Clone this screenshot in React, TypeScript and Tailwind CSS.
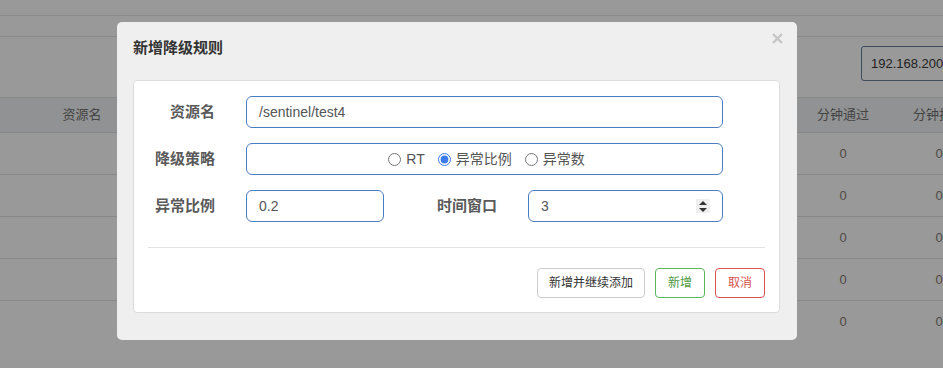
const font = { fontFamily: '"Liberation Sans", "Noto Sans CJK SC", sans-serif' };

const rows = [0, 1, 2, 3, 4];

function Radio({ checked, label }: { checked?: boolean; label: string }) {
  return (
    <label className="flex items-center gap-[5px] text-[14px] text-[#555]">
      <input
        type="radio"
        name="grade"
        checked={!!checked}
        onChange={() => {}}
        className="m-0 w-[13px] h-[13px] accent-[#3b7cf2]"
      />
      <span>{label}</span>
    </label>
  );
}

function Spinner() {
  return (
    <span className="w-[14px] h-[14px] bg-[#efefef] flex items-center justify-center">
      <svg width="8" height="11" viewBox="0 0 8 11">
        <path d="M4 0 L8 4 L0 4 Z" fill="#333" />
        <path d="M0 7 L8 7 L4 11 Z" fill="#333" />
      </svg>
    </span>
  );
}

export default function App() {
  return (
    <div className="relative w-[943px] h-[368px] bg-[#999999] overflow-hidden" style={font}>
      {/* page behind the overlay */}
      <div className="h-[16px] border-b border-[#8b8b8b]" />
      <div className="h-[21px] border-b border-[#8b8b8b]" />
      <div className="h-[60px] pt-[9px] pl-[861px]">
        <div className="w-[120px] h-[35px] border border-[#3e4c5e] rounded-[3px] flex items-center pl-[9px] text-[13px] text-[#222]">
          192.168.200.1
        </div>
      </div>
      <div className="grid grid-cols-[164px_631px_96px_96px] h-[36px] border-y border-[#888] bg-[#919293] items-center text-[13px] text-[#444]">
        <div className="text-center">资源名</div>
        <div />
        <div className="text-center">分钟通过</div>
        <div className="text-center">分钟拒绝</div>
      </div>
      {rows.map((r) => (
        <div
          key={r}
          className={
            r < 4
              ? "grid grid-cols-[164px_631px_96px_96px] h-[42px] border-b border-[#888] items-center text-[13px] text-[#4f4a45]"
              : "grid grid-cols-[164px_631px_96px_96px] h-[41px] items-center text-[13px] text-[#4f4a45]"
          }
        >
          <div />
          <div />
          <div className="text-center">0</div>
          <div className="text-center">0</div>
        </div>
      ))}

      {/* modal */}
      <div className="absolute left-[117px] top-[22px] w-[680px] h-[318px] bg-[#efefef] rounded-[5px] px-[16px]">
        <div className="h-[58px] pt-[16px]">
          <h4 className="text-[15px] leading-[20px] font-bold text-[#333]">新增降级规则</h4>
        </div>
        <svg className="absolute right-[14px] top-[11px]" width="11" height="11" viewBox="0 0 11 11">
          <path d="M1 1 L10 10 M10 1 L1 10" stroke="#c6c6c6" strokeWidth="2.4" />
        </svg>

        <div className="w-[647px] h-[233px] bg-white border border-[#dcdcdc] rounded-[4px] pt-[15px]">
          <div className="flex flex-col gap-[15px]">
            <div className="flex items-center h-[32px]">
              <div className="w-[81px] text-right text-[15px] font-bold text-[#5a5a5a]">资源名</div>
              <div className="ml-[31px] w-[477px] h-[32px] border border-[#4a7cc0] rounded-[6px] flex items-center pl-[12px] text-[14px] text-[#555]">
                /sentinel/test4
              </div>
            </div>
            <div className="flex items-center h-[32px]">
              <div className="w-[81px] text-right text-[15px] font-bold text-[#5a5a5a]">降级策略</div>
              <div className="ml-[31px] w-[477px] h-[32px] border border-[#4a7cc0] rounded-[6px] flex items-center justify-center gap-[13px] pl-[4px]">
                <Radio label="RT" />
                <Radio label="异常比例" checked />
                <Radio label="异常数" />
              </div>
            </div>
            <div className="flex items-center h-[32px]">
              <div className="w-[81px] text-right text-[15px] font-bold text-[#5a5a5a]">异常比例</div>
              <div className="ml-[31px] w-[138px] h-[32px] border border-[#4a7cc0] rounded-[6px] flex items-center pl-[12px] text-[14px] text-[#555]">
                0.2
              </div>
              <div className="w-[113px] text-right text-[15px] font-bold text-[#5a5a5a]">时间窗口</div>
              <div className="ml-[31px] w-[195px] h-[32px] border border-[#4a7cc0] rounded-[6px] flex items-center justify-between pl-[12px] pr-[12px] text-[14px] text-[#555]">
                <span>3</span>
                <Spinner />
              </div>
            </div>
          </div>

          <div className="mx-[14px] mt-[25px] h-px bg-[#e3e3e3]" />

          <div className="mx-[14px] mt-[20px] flex justify-end gap-[10px] text-[12px]">
            <button className="w-[108px] h-[30px] border border-[#cccccc] rounded-[4px] bg-white text-[#333]">
              新增并继续添加
            </button>
            <button className="w-[50px] h-[30px] border border-[#5cb85c] rounded-[4px] bg-white text-[#4f9a3f]">
              新增
            </button>
            <button className="w-[50px] h-[30px] border border-[#d9534f] rounded-[4px] bg-white text-[#d9534f]">
              取消
            </button>
          </div>
        </div>
      </div>
    </div>
  );
}
